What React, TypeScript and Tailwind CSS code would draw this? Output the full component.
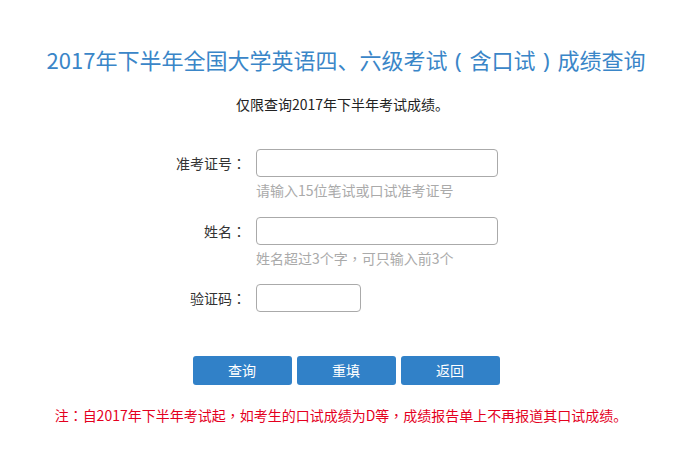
import React from "react";

const font = { fontFamily: '"Noto Sans CJK SC", "Noto Sans", sans-serif' };
const tc = { fontFamily: '"Noto Sans CJK TC", "Noto Sans CJK SC", sans-serif' };

const P = ({ c }: { c: string }) => <span style={tc}>{c}</span>;

function Row({
  label,
  inputW,
  hint,
}: {
  label: string;
  inputW: string;
  hint?: React.ReactNode;
}) {
  return (
    <div className="flex">
      <div className="w-[90px] h-[28px] leading-[28px] text-right text-[14px] text-[#333] mr-[10px]">
        {label}
        <P c="：" />
      </div>
      <div className="flex flex-col">
        <input
          className={`${inputW} h-[28px] border border-[#aaaaaa] rounded-[4px] bg-white outline-none px-2 text-[14px]`}
        />
        {hint && (
          <div className="mt-[3px] h-[20px] leading-[20px] text-[14px] text-[#aaaaaa]">
            {hint}
          </div>
        )}
      </div>
    </div>
  );
}

export default function App() {
  return (
    <div className="w-[682px] h-[464px] bg-white flex flex-col" style={font}>
      <h1 className="pt-[44px] text-center text-[22px] leading-[30px] text-[#3a86c8] ml-[10px]">
        2017年下半年全国大学英语四、六级考试
        <span className="inline-block w-[22px] text-center" style={{ fontFamily: '"Noto Sans", sans-serif' }}>(</span>
        含口试
        <span className="inline-block w-[22px] text-center" style={{ fontFamily: '"Noto Sans", sans-serif' }}>)</span>
        成绩查询
      </h1>
      <p className="mt-[19px] text-center text-[14px] leading-[20px] text-[#222] ml-[3px]">
        仅限查询2017年下半年考试成绩。
      </p>
      <div className="mt-[35px] ml-[156px] flex flex-col">
        <Row label="准考证号" inputW="w-[242px]" hint="请输入15位笔试或口试准考证号" />
        <div className="mt-[17px]">
          <Row
            label="姓名"
            inputW="w-[242px]"
            hint={
              <>
                姓名超过3个字<P c="，" />可只输入前3个
              </>
            }
          />
        </div>
        <div className="mt-[16px]">
          <Row label="验证码" inputW="w-[105px]" />
        </div>
      </div>
      <div className="mt-[44px] flex justify-center gap-[5px] ml-[10px]">
        {["查询", "重填", "返回"].map((t) => (
          <button
            key={t}
            className="w-[99px] h-[29px] rounded-[3px] bg-[#3181c8] text-white text-[14px] leading-[29px]"
          >
            {t}
          </button>
        ))}
      </div>
      <p className="mt-[20px] text-center text-[14px] leading-[20px] text-[#e4001e]">
        注<P c="：" />自2017年下半年考试起<P c="，" />如考生的口试成绩为D等<P c="，" />成绩报告单上不再报道其口试成绩。
      </p>
    </div>
  );
}
